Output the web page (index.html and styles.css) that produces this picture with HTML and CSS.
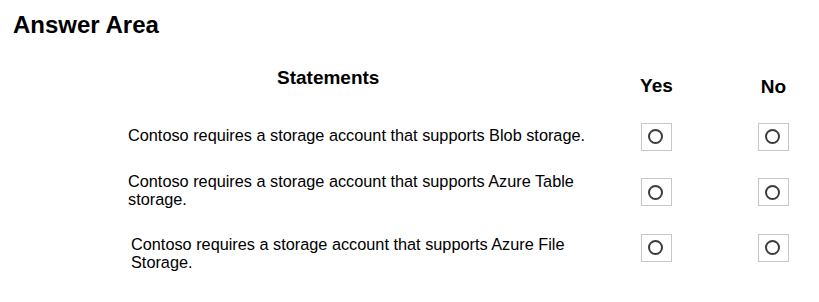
FILE: index.html
```html
<!doctype html>
<html>
  <head>
    <meta charset="UTF-8" />
    <meta name="viewport" content="width=device-width, initial-scale=1.0" />
    <title>Answer Area</title>
    <link rel="stylesheet" href="styles.css">
  </head>
  <body>
    <h1 class="title">Answer Area</h1>

    <div class="answer-grid">
      <div class="head head-statements">Statements</div>
      <div class="head head-yes">Yes</div>
      <div class="head head-no">No</div>

      <div class="statement">Contoso requires a storage account that supports Blob storage.</div>
      <div class="choice"><span class="radio"></span></div>
      <div class="choice"><span class="radio"></span></div>

      <div class="statement">Contoso requires a storage account that supports Azure Table storage.</div>
      <div class="choice"><span class="radio"></span></div>
      <div class="choice"><span class="radio"></span></div>

      <div class="statement statement-shift">Contoso requires a storage account that supports Azure File Storage.</div>
      <div class="choice"><span class="radio"></span></div>
      <div class="choice"><span class="radio"></span></div>
    </div>
  </body>
</html>
```

FILE: styles.css
```css
html,
body {
  overflow: hidden;
}

body {
  margin: 0;
  background-color: #fff;
  color: #000;
  font-family: "Liberation Sans", Arial, sans-serif;
}

.title {
  margin: 11px 0 0 13px;
  font-size: 24px;
  line-height: 28px;
  font-weight: bold;
}

.answer-grid {
  display: grid;
  grid-template-columns: 470px 117px 117px;
  grid-template-rows: 49px repeat(3, 55.5px);
  align-items: center;
  margin-top: 21px;
  margin-left: 128px;
}

.head {
  align-self: start;
  font-size: 19px;
  line-height: 22px;
  font-weight: bold;
  text-align: center;
}

.head-statements {
  padding-top: 7px;
  padding-left: 149px;
  text-align: left;
}

.head-yes {
  padding-top: 15px;
}

.head-no {
  padding-top: 16px;
}

.statement {
  font-size: 16.3px;
  line-height: 18px;
  padding-bottom: 4px;
}

.statement-shift {
  padding-left: 3px;
  padding-top: 10px;
  padding-bottom: 0;
}

.choice {
  display: flex;
  justify-content: center;
}

.radio {
  display: flex;
  align-items: center;
  justify-content: center;
  width: 29px;
  height: 26px;
  border: 1px solid #c8c8c8;
}

.radio::before {
  content: "";
  width: 11px;
  height: 11px;
  margin-left: -3px;
  border: 2px solid #3c3c3c;
  border-radius: 50%;
}
```
